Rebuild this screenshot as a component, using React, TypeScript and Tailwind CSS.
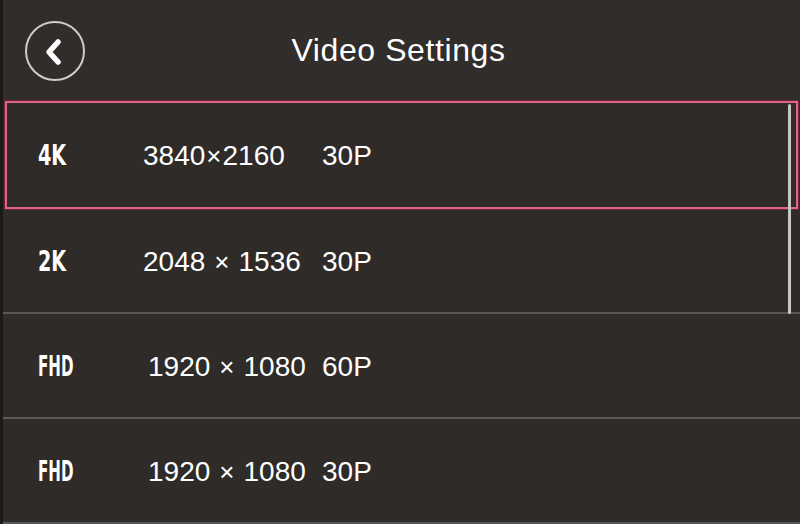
import React from 'react';

type Mode = {
  label: string;
  labelScale: string;
  w: string;
  h: string;
  fps: string;
  pad: string;
  gap: string;
  selected?: boolean;
};

const modes: Mode[] = [
  { label: '4K', labelScale: 'scale-x-[0.76]', w: '3840', h: '2160', fps: '30P', pad: 'pl-0', gap: 'gap-[1px]', selected: true },
  { label: '2K', labelScale: 'scale-x-[0.76]', w: '2048', h: '1536', fps: '30P', pad: 'pl-0', gap: 'gap-[9px]' },
  { label: 'FHD', labelScale: 'scale-x-[0.6]', w: '1920', h: '1080', fps: '60P', pad: 'pl-[5px]', gap: 'gap-[9px]' },
  { label: 'FHD', labelScale: 'scale-x-[0.6]', w: '1920', h: '1080', fps: '30P', pad: 'pl-[5px]', gap: 'gap-[9px]' },
];

const BackButton = () => (
  <button
    type="button"
    className="w-[60px] h-[60px] shrink-0 rounded-full border-2 border-[#cfcdcb] flex items-center justify-center">
    <svg width="22" height="28" viewBox="0 0 22 28" fill="none" className="-ml-[3px] mt-[2px]">
      <path
        d="M15 4L6 14l9 10"
        stroke="#ffffff"
        strokeWidth="5.5"
        strokeLinecap="round"
        strokeLinejoin="round"
      />
    </svg>
  </button>
);

const Row = ({ m }: { m: Mode }) => (
  <div
    className={
      m.selected
        ? 'h-[108px] flex items-center pt-[2px] border-2 border-[#dc6688] shadow-[0_0_0_1px_#6e2139] mx-[2px] pl-[31px]'
        : 'h-[105px] flex items-center pt-[3px] border-b-2 border-[#5a5857] pl-[35px]'
    }>
    <div className="w-[105px] shrink-0">
      <span
        className={`inline-block origin-left font-bold text-[28px] text-white ${m.labelScale}`}
        style={{ fontFamily: '"DejaVu Sans Condensed", "DejaVu Sans", sans-serif' }}>
        {m.label}
      </span>
    </div>
    <div
      className={`w-[179px] shrink-0 flex items-center text-[28px] text-white ${m.pad} ${m.gap}`}
      style={{ fontFamily: '"Liberation Sans", Arial, sans-serif' }}>
      <span>{m.w}</span>
      <span className="text-[26px]">×</span>
      <span>{m.h}</span>
    </div>
    <span
      className="text-[28px] text-white"
      style={{ fontFamily: '"Liberation Sans", Arial, sans-serif' }}>
      {m.fps}
    </span>
  </div>
);

export default function App() {
  return (
    <div className="relative w-[800px] h-[524px] overflow-hidden bg-[#2e2b29] border-l-[3px] border-[#1c1a19]">
      <header className="h-[101px] flex items-center pl-[22px] pr-[88px] bg-[#302d2b]">
        <BackButton />
        <h1
          className="flex-1 text-center text-[32px] tracking-[0.6px] text-white -mt-[2px]"
          style={{ fontFamily: '"Liberation Sans", Arial, sans-serif' }}>
          Video Settings
        </h1>
      </header>
      <main>
        {modes.map((m, i) => (
          <Row key={i} m={m} />
        ))}
      </main>
      <div className="absolute left-[785px] top-[104px] w-[3px] h-[210px] rounded-full bg-[#c9c7c6]" />
    </div>
  );
}
